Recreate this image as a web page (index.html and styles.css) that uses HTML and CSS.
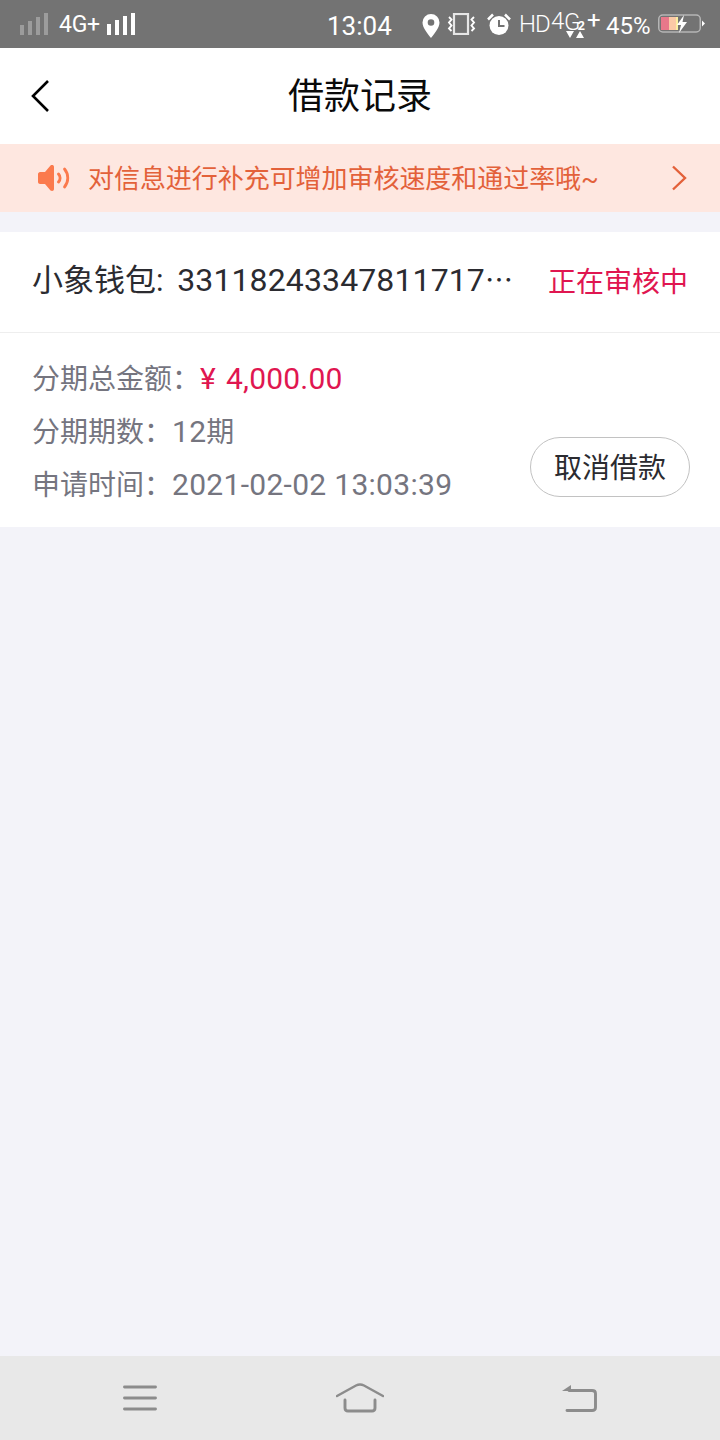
FILE: index.html
```html
<!DOCTYPE html>
<html lang="zh">
<head>
<meta charset="utf-8">
<title>借款记录</title>
<link rel="stylesheet" href="styles.css">
</head>
<body>
<div class="app">
  <div class="status">
    <svg class="sig" width="28" height="22" viewBox="0 0 28 22"><g fill="#9c9c9c"><rect x="0" y="12" width="4" height="10"/><rect x="8" y="8" width="4" height="14"/><rect x="16" y="4" width="4" height="18"/><rect x="24" y="0" width="4" height="22"/></g></svg>
    <span class="net">4G+</span>
    <svg class="sig2" width="28" height="22" viewBox="0 0 28 22"><g fill="#fff"><rect x="0" y="11" width="4" height="11"/><rect x="8" y="7" width="4" height="15"/><rect x="16" y="3" width="4" height="19"/><rect x="24" y="0" width="4" height="22"/></g></svg>
    <span class="time">13:04</span>
    <svg class="pin" width="18" height="24" viewBox="0 0 18 24"><path fill="#fff" fill-rule="evenodd" d="M9 0a8.500 8.500 0 0 0-8.500 8.500C.5 14 6 20 9 24c3-4 8.500-10 8.500-15.500A8.500 8.500 0 0 0 9 0zm0 5.200a3.300 3.300 0 1 1 0 6.600 3.300 3.300 0 0 1 0-6.600z"/></svg>
    <svg class="vib" width="29" height="22" viewBox="0 0 29 22"><rect x="7" y="1" width="14" height="20" fill="none" stroke="#e6e6e6" stroke-width="2.200"/><path d="M2 4l2.500 2.500L2 9.500l2.500 3L2 15.500l2.500 2.500M27 4l-2.500 2.500L27 9.500l-2.500 3 2.500 3-2.500 2.500" fill="none" stroke="#fff" stroke-width="1.900"/></svg>
    <svg class="alarm" width="24" height="22" viewBox="0 0 24 22"><circle cx="12" cy="12.500" r="9.500" fill="#fff"/><path d="M1 6.500L6 1.500M23 6.500L18 1.500" stroke="#fff" stroke-width="2.500"/><path d="M12 7v6h5.500" fill="none" stroke="#737373" stroke-width="2"/></svg>
    <span class="hd">HD</span>
    <span class="g4">4</span>
    <span class="g-wrap">
      <span class="g-g">G</span><span class="g-2">2</span>
      <svg class="arrows" width="24" height="8" viewBox="0 0 24 8"><path fill="#fff" d="M0 0h8L4 7zM10 7l4-7 4 7z"/></svg>
    </span>
    <span class="plus">+</span>
    <span class="batt-text">45%</span>
    <svg class="batt" width="48" height="20" viewBox="0 0 48 20"><rect x="0.750" y="1" width="41.500" height="17" rx="4" fill="none" stroke="#b5b5b5" stroke-width="1.500"/><rect x="3" y="3" width="8" height="13" fill="#e8788a"/><rect x="11" y="3" width="7" height="13" fill="#fbc9a6"/><rect x="18" y="3" width="2" height="13" fill="#fbeea0"/><path fill="#fff" d="M26 1l-7 10h4l-2 8 8-11h-4.500z"/><path fill="#fff" d="M44 6.500l3 3-3 3z"/></svg>
  </div>

  <header class="nav">
    <svg class="back" width="20" height="34" viewBox="0 0 20 34"><path d="M18 2L3 17l15 15" fill="none" stroke="#000" stroke-width="2.600"/></svg>
    <h1 class="title">借款记录</h1>
  </header>

  <div class="banner">
    <svg class="spk" width="32" height="28" viewBox="0 0 32 28"><path fill="#fb7a4d" d="M2 8h5L12.500 1.500c1.500-1 3.500-.5 3.500 1.500v22c0 2-2 2.500-3.500 1.500L7 20H2c-1 0-2-1-2-2v-8c0-1 1-2 2-2z"/><path d="M20.500 10a6 6 0 0 1 0 8" fill="none" stroke="#fb7a4d" stroke-width="3" stroke-linecap="round"/><path d="M26.500 5a14 14 0 0 1 0 18" fill="none" stroke="#fb7a4d" stroke-width="2.800" stroke-linecap="round"/></svg>
    <span class="banner-text">对信息进行补充可增加审核速度和通过率哦~</span>
    <svg class="chev" width="16" height="26" viewBox="0 0 16 26"><path d="M2 1.500L14 13 2 24.500" fill="none" stroke="#e3613a" stroke-width="2.400"/></svg>
  </div>

  <section class="card">
    <div class="card-head">
      <span class="order">小象钱包: <span class="order-no">33118243347811717</span><span class="dots">⋯</span></span>
      <span class="state">正在审核中</span>
    </div>
    <div class="card-body">
      <div class="lines">
        <div class="line">分期总金额：<span class="amount"><span class="yen">¥</span>4,000.00</span></div>
        <div class="line">分期期数：<span class="num">12</span>期</div>
        <div class="line">申请时间：<span class="num">2021-02-02 13:03:39</span></div>
      </div>
      <button class="cancel">取消借款</button>
    </div>
  </section>

  <main class="fill"></main>

  <nav class="bottom">
    <svg width="34" height="26" viewBox="0 0 34 26"><path d="M1.500 2h31M1.500 13h31M1.500 24h31" fill="none" stroke="#8c8c8c" stroke-width="2.900" stroke-linecap="round"/></svg>
    <svg width="48" height="30" viewBox="0 0 48 30"><path d="M1 13L20 2.500c3-1.500 5-1.500 8 0L47 13" fill="none" stroke="#8c8c8c" stroke-width="2.500" stroke-linecap="round"/><path d="M9 17v8c0 2 1 3 3 3h24c2 0 3-1 3-3v-8" fill="none" stroke="#8c8c8c" stroke-width="2.900" stroke-linecap="round"/></svg>
    <svg class="nav-back" width="36" height="28" viewBox="0 0 36 28"><path fill="#8c8c8c" d="M1 7l9-6v6z"/><path d="M8 6.500h23c2.500 0 3.500 1 3.500 3v14c0 2-1 3-3.500 3H6" fill="none" stroke="#8c8c8c" stroke-width="2.900" stroke-linecap="round"/></svg>
  </nav>
</div>
</body>
</html>
```

FILE: styles.css
```css
* { box-sizing: border-box; margin: 0; padding: 0; }
html, body { width: 720px; height: 1440px; overflow: hidden; }
body { font-family: Roboto, "Noto Sans CJK SC", sans-serif; background: #f3f3f9; }
.app { width: 720px; height: 1440px; display: flex; flex-direction: column; }

.status { height: 48px; flex: none; background: #737373; color: #fff; display: flex; align-items: center; padding-left: 20px; position: relative; }
.status svg { flex: none; }
.net { font-size: 23px; margin-left: 11px; width: 40px; white-space: nowrap; letter-spacing: -0.3px; }
.sig2 { margin-left: 8px; }
.time { font-size: 26px; margin-left: 192px; width: 65px; margin-top: 3px; white-space: nowrap; }
.pin { margin-left: 30px; margin-top: 3px; }
.vib { margin-left: 7px; }
.alarm { margin-left: 11px; }
.hd { font-size: 24px; margin-left: 8px; width: 29px; letter-spacing: -1px; font-weight: 300; white-space: nowrap; }
.g4 { font-size: 24px; margin-left: 3px; width: 13px; margin-top: -7px; font-weight: 300; }
.g-wrap { position: relative; display: block; width: 23px; height: 48px; line-height: 44px; white-space: nowrap; }
.g-g { font-size: 24px; font-weight: 300; letter-spacing: -3px; }
.g-2 { font-size: 13px; font-weight: 700; }
.arrows { position: absolute; left: 2px; top: 31px; }
.plus { font-size: 24px; width: 14px; margin-top: -8px; line-height: 1; font-weight: 400; }
.batt-text { font-size: 24px; width: 47px; margin-left: 5px; margin-top: 3px; white-space: nowrap; }
.batt { margin-left: 5px; margin-top: -1px; }

.nav { height: 96px; flex: none; background: #fff; display: flex; align-items: center; justify-content: center; position: relative; }
.back { position: absolute; left: 30px; top: 31px; }
.title { font-size: 36px; font-weight: 400; color: #0a0a0a; line-height: 1; margin-top: 2px; }

.banner { height: 68px; flex: none; background: #fee7e0; display: flex; align-items: center; padding-left: 38px; }
.spk { flex: none; }
.banner-text { font-size: 26px; color: #e3613a; margin-left: 18px; width: 583px; white-space: nowrap; margin-top: -4px; letter-spacing: -0.05px; }
.chev { flex: none; }

.card { margin-top: 20px; background: #fff; flex: none; height: 295px; }
.card-head { height: 101px; border-bottom: 1px solid #eeeeee; display: flex; align-items: center; justify-content: space-between; padding: 0 32px; }
.order { font-size: 31px; line-height: 40px; color: #2b2b30; margin-top: -2px; display: flex; align-items: baseline; white-space: pre; }
.order-no { font-size: 32px; letter-spacing: 0.12px; margin-left: 6px; }
.dots { font-size: 28px; margin-left: 0; }
.state { font-size: 28px; color: #e01650; white-space: nowrap; margin-top: -4px; }
.card-body { display: flex; justify-content: space-between; padding: 0 30px 0 32px; }
.lines { padding-top: 19px; }
.line { font-size: 28px; line-height: 53px; height: 53px; color: #75757f; white-space: nowrap; }
.num { font-size: 30px; letter-spacing: 0.3px; }
.amount { font-size: 30px; color: #e01650; letter-spacing: 0.2px; }
.yen { margin-right: 10px; }
.cancel { width: 160px; height: 60px; margin-top: 104px; border: 1px solid #c2c2c2; border-radius: 30px; background: #fff; font: inherit; font-size: 28px; color: #2b2b30; padding-bottom: 3px; }

.fill { flex: 1; }
.bottom { height: 84px; flex: none; background: #e8e8e8; display: grid; grid-template-columns: repeat(3, 220px); justify-items: center; align-items: center; padding: 0 30px; }
.nav-back { margin-right: 2px; }
```
